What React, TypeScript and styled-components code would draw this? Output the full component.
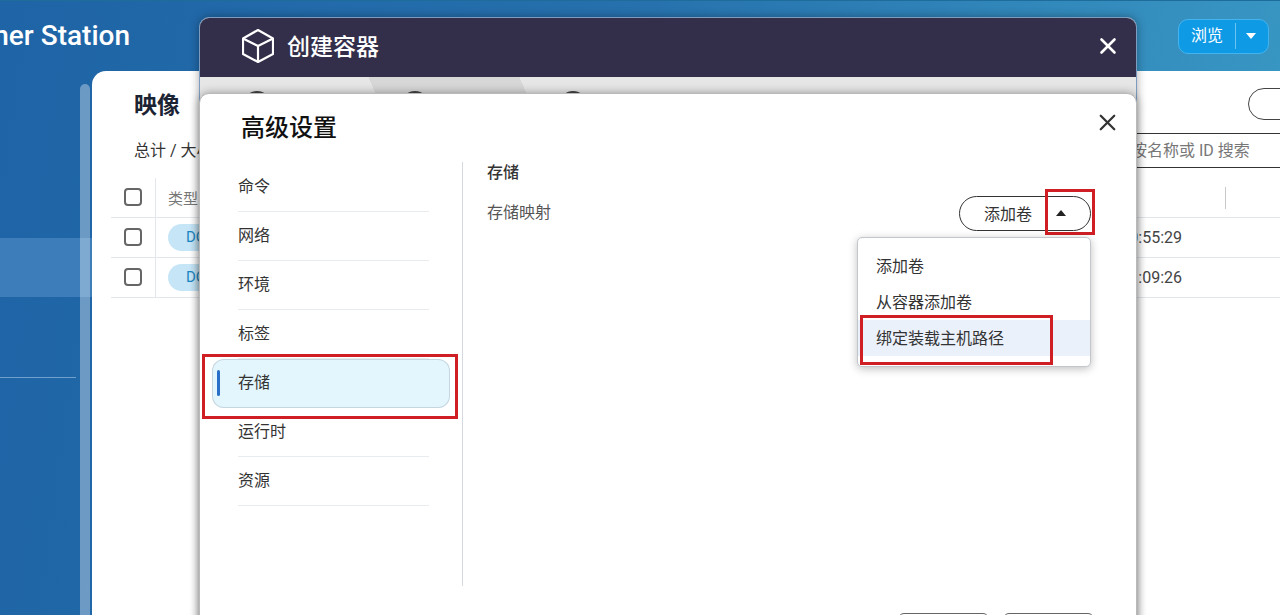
import React from "react";
import styled, { createGlobalStyle } from "styled-components";
import { X } from "lucide-react";

const GlobalStyle = createGlobalStyle`
  html, body {
    margin: 0;
    width: 1280px;
    height: 615px;
    overflow: hidden;
    font-family: Roboto, "Noto Sans CJK SC", sans-serif;
  }
  * {
    box-sizing: border-box;
  }
`;

const Page = styled.div`
  position: relative;
  width: 1280px;
  height: 615px;
  overflow: hidden;
  display: flex;
  flex-direction: column;
  border-top: 1px solid #1d6c99;
  background: linear-gradient(98deg, #1e64a6 0%, #2670ad 45%, #3a9ac5 100%);
`;

const TopBar = styled.header`
  flex: none;
  height: 70px;
  display: flex;
  align-items: center;
  justify-content: space-between;
  padding-right: 11px;
`;

const AppTitle = styled.div`
  width: 130px;
  height: 40px;
  display: flex;
  justify-content: flex-end;
  align-items: center;
  overflow: hidden;
  white-space: nowrap;
  margin-top: -1px;
  color: #fff;
  font-size: 28px;
  font-weight: 500;
`;

const BrowseButton = styled.div`
  width: 91px;
  height: 35px;
  display: flex;
  align-items: center;
  color: #fff;
  font-size: 16px;
  background: #0f9ae6;
  border: 1px solid #45b3ee;
  border-radius: 10px;
`;

const BrowseLabel = styled.span`
  width: 57px;
  height: 26px;
  line-height: 26px;
  text-align: center;
  border-right: 1px solid #6cc4f2;
`;

const BrowseCaret = styled.span`
  margin-left: 10px;
  width: 0;
  height: 0;
  border-left: 5px solid transparent;
  border-right: 5px solid transparent;
  border-top: 6px solid #fff;
`;

const Body = styled.div`
  flex: 1;
  min-height: 0;
  display: flex;
`;

const Sidebar = styled.nav`
  position: relative;
  flex: none;
  width: 92px;
  padding-top: 167px;
`;

const SidebarActive = styled.div`
  height: 59px;
  background: #3c7dba;
`;

const SidebarRule = styled.div`
  width: 76px;
  height: 1px;
  margin-top: 80px;
  background: #6f9fcc;
`;

const Scrollbar = styled.div`
  position: absolute;
  left: 80px;
  top: 13px;
  bottom: 0;
  width: 10px;
  border-radius: 5px 5px 0 0;
  background: rgba(255, 255, 255, 0.34);
`;

const Panel = styled.main`
  flex: 1;
  min-width: 0;
  padding: 17px 0 0 19px;
  background: #fff;
  border-radius: 14px 0 0 0;
`;

const PanelHead = styled.div`
  height: 90px;
  padding-left: 23px;
  position: relative;
  display: flex;
  flex-direction: column;
`;

const PanelTitle = styled.h2`
  margin: 1px 0 0;
  height: 36px;
  line-height: 34px;
  font-size: 23px;
  font-weight: 700;
  color: #1c2433;
`;

const PanelSummary = styled.div`
  margin-top: 14px;
  line-height: 24px;
  font-size: 16px;
  color: #333;
`;

const GhostButton = styled.div`
  position: absolute;
  left: 1137px;
  top: 0;
  width: 80px;
  height: 32px;
  border: 1px solid #444;
  border-radius: 16px;
`;

const SearchBox = styled.div`
  position: absolute;
  left: 900px;
  top: 45px;
  width: 300px;
  height: 35px;
  padding-left: 120px;
  line-height: 33px;
  white-space: nowrap;
  font-size: 16px;
  color: #777;
  border-top: 1px solid #333;
  border-bottom: 1px solid #333;
`;

const TableRow = styled.div<{ $head?: boolean }>`
  height: 40px;
  display: flex;
  align-items: center;
  border-bottom: 1px solid #e3e6ea;
  font-size: 15px;
  color: ${(p) => (p.$head ? "#777" : "#333")};
`;

const CheckCell = styled.div`
  flex: none;
  width: 45px;
  height: 100%;
  padding: 0 0 1px 13px;
  display: flex;
  align-items: center;
  border-right: 1px solid #e3e6ea;
`;

const Checkbox = styled.span`
  width: 18px;
  height: 18px;
  border: 2px solid #666;
  border-radius: 4px;
`;

const TypeCell = styled.div`
  flex: none;
  width: 120px;
  margin-left: 12px;
`;

const TypePill = styled.span`
  display: block;
  width: 90px;
  height: 27px;
  line-height: 27px;
  padding-left: 18px;
  font-size: 15px;
  color: #1b86c2;
  background: #c6e6f8;
  border-radius: 14px;
`;

const TimeCell = styled.div`
  width: 894px;
  text-align: right;
  font-size: 16px;
  color: #444;
`;

const HeadRule = styled.span`
  width: 1px;
  height: 22px;
  margin-left: 937px;
  background: #c9c9c9;
`;

const CreateDialog = styled.section`
  position: absolute;
  left: 199px;
  top: 16px;
  width: 938px;
  bottom: -120px;
  border-radius: 10px 10px 0 0;
  border: 1px solid #7d9cc0;
  overflow: hidden;
  background: #e6e6e6;
  box-shadow: 0 0 10px rgba(0, 0, 0, 0.35);
`;

const CreateHeader = styled.div`
  height: 59px;
  padding: 0 15px 3px 42px;
  display: flex;
  align-items: center;
  color: #fff;
  background: #332e4a;
`;

const CreateTitle = styled.h1`
  flex: 1;
  margin: 0 0 2px 13px;
  font-size: 23px;
  font-weight: 500;
`;

const Steps = styled.div`
  height: 40px;
  padding: 14px 0 0 43px;
  display: flex;
  gap: 130px;
  background: linear-gradient(
    66deg,
    #e6e6e6 170px,
    #d7d7d7 170px,
    #d7d7d7 308px,
    #e6e6e6 308px
  );
`;

const StepDot = styled.span`
  width: 28px;
  height: 28px;
  border: 2px solid #444;
  border-radius: 50%;
`;

const SettingsDialog = styled.section`
  position: absolute;
  left: 199px;
  top: 92px;
  width: 938px;
  bottom: -120px;
  background: #fff;
  border: 1px solid #b9b9b9;
  border-radius: 10px 10px 0 0;
  box-shadow: 0 0 10px rgba(0, 0, 0, 0.35);
`;

const SettingsHeader = styled.div`
  height: 68px;
  padding: 0 15px 6px 41px;
  display: flex;
  align-items: center;
  justify-content: space-between;
`;

const SettingsTitle = styled.h2`
  margin: 0;
  font-size: 24px;
  font-weight: 500;
  color: #111;
`;

const CloseButton = styled.span<{ $tone: string; $lift?: number }>`
  display: flex;
  color: ${(p) => p.$tone};
  margin-bottom: ${(p) => p.$lift ?? 0}px;
`;

const Columns = styled.div`
  height: 424px;
  display: flex;
`;

const SideMenu = styled.ul`
  flex: none;
  width: 263px;
  height: 100%;
  margin: 0;
  padding: 1px 0 0 12px;
  list-style: none;
  border-right: 1px solid #d5dae0;
`;

const MenuItem = styled.li<{ $active?: boolean }>`
  position: relative;
  width: 238px;
  height: 49px;
  padding: 0 0 6px 26px;
  display: flex;
  align-items: center;
  font-size: 16px;
  color: #333;
  border-radius: 12px;
  background: ${(p) => (p.$active ? "#e3f5fd" : "transparent")};
  box-shadow: ${(p) => (p.$active ? "inset 0 0 0 1px #c6d6df" : "none")};

  &::before {
    content: "";
    display: ${(p) => (p.$active ? "block" : "none")};
    position: absolute;
    left: 5px;
    top: 11px;
    width: 3px;
    height: 26px;
    border-radius: 2px;
    background: #2a70c9;
  }

  &::after {
    content: "";
    display: ${(p) => (p.$active ? "none" : "block")};
    position: absolute;
    left: 26px;
    bottom: 0;
    width: 191px;
    height: 1px;
    background: #e9ecef;
  }
`;

const RedMark = styled.span<{ $inset: string }>`
  position: absolute;
  inset: ${(p) => p.$inset};
  border: 3px solid #cf1f24;
  pointer-events: none;
`;

const Content = styled.div`
  flex: 1;
  padding: 1px 45px 0 24px;
`;

const SectionTitle = styled.h3`
  margin: 0;
  line-height: 20px;
  font-size: 16px;
  font-weight: 500;
  color: #333;
`;

const MappingRow = styled.div`
  margin-top: 13px;
  display: flex;
  align-items: center;
  justify-content: space-between;
`;

const MappingLabel = styled.span`
  margin-bottom: 6px;
  font-size: 16px;
  color: #555;
`;

const SplitButton = styled.div`
  position: relative;
  width: 132px;
  height: 35px;
  padding: 0 0 1px 24px;
  display: flex;
  align-items: center;
  font-size: 16px;
  color: #333;
  border: 1px solid #333;
  border-radius: 18px;
`;

const SplitCaret = styled.span`
  margin-left: 24px;
  width: 0;
  height: 0;
  border-left: 5px solid transparent;
  border-right: 5px solid transparent;
  border-bottom: 6px solid #222;
`;

const Dropdown = styled.ul`
  position: absolute;
  right: -1px;
  top: 40px;
  width: 234px;
  margin: 0;
  padding: 10px 0;
  list-style: none;
  background: #fff;
  border: 1px solid #c3c7cc;
  border-radius: 5px;
  box-shadow: 0 2px 8px rgba(0, 0, 0, 0.25);
`;

const DropdownItem = styled.li<{ $hover?: boolean }>`
  position: relative;
  height: 36px;
  padding: 0 0 3px 18px;
  display: flex;
  align-items: center;
  font-size: 16px;
  color: #333;
  background: ${(p) => (p.$hover ? "#ebf1fb" : "transparent")};
`;

const Footer = styled.div`
  padding: 27px 42px 0 0;
  display: flex;
  justify-content: flex-end;
  gap: 14px;
`;

const FooterButton = styled.span`
  width: 91px;
  height: 36px;
  border: 1px solid #666;
  border-radius: 6px;
`;

const CubeIcon = () => (
  <svg width="32" height="34" viewBox="0 0 32 34" fill="none" stroke="#fff" strokeWidth="2.2" strokeLinejoin="round">
    <path d="M16 1 L31 9.5 V25 L16 33 L1 25 V9.5 Z" />
    <path d="M1 9.5 L16 17 L31 9.5 M16 17 V33" />
  </svg>
);

const menuItems = ["命令", "网络", "环境", "标签", "存储", "运行时", "资源"];

const App = () => {
  return (
    <>
      <GlobalStyle />
      <Page>
        <TopBar>
          <AppTitle>Container Station</AppTitle>
          <BrowseButton>
            <BrowseLabel>浏览</BrowseLabel>
            <BrowseCaret />
          </BrowseButton>
        </TopBar>
        <Body>
          <Sidebar>
            <SidebarActive />
            <SidebarRule />
            <Scrollbar />
          </Sidebar>
          <Panel>
            <PanelHead>
              <PanelTitle>映像</PanelTitle>
              <PanelSummary>总计 / 大小</PanelSummary>
              <GhostButton />
              <SearchBox>按名称或 ID 搜索</SearchBox>
            </PanelHead>
            <TableRow $head>
              <CheckCell>
                <Checkbox />
              </CheckCell>
              <TypeCell>类型</TypeCell>
              <HeadRule />
            </TableRow>
            <TableRow>
              <CheckCell>
                <Checkbox />
              </CheckCell>
              <TypeCell>
                <TypePill>DOCKER</TypePill>
              </TypeCell>
              <TimeCell>2023/08/16 10:55:29</TimeCell>
            </TableRow>
            <TableRow>
              <CheckCell>
                <Checkbox />
              </CheckCell>
              <TypeCell>
                <TypePill>DOCKER</TypePill>
              </TypeCell>
              <TimeCell>2023/08/16 11:09:26</TimeCell>
            </TableRow>
          </Panel>
        </Body>

        <CreateDialog>
          <CreateHeader>
            <CubeIcon />
            <CreateTitle>创建容器</CreateTitle>
            <CloseButton $tone="#fff">
              <X size={26} strokeWidth={2.4} />
            </CloseButton>
          </CreateHeader>
          <Steps>
            <StepDot />
            <StepDot />
            <StepDot />
          </Steps>
        </CreateDialog>

        <SettingsDialog>
          <SettingsHeader>
            <SettingsTitle>高级设置</SettingsTitle>
            <CloseButton $tone="#333" $lift={6}>
              <X size={27} strokeWidth={2} />
            </CloseButton>
          </SettingsHeader>
          <Columns>
            <SideMenu>
              {menuItems.map((item) => (
                <MenuItem key={item} $active={item === "存储"}>
                  {item}
                  {item === "存储" && <RedMark $inset="-5px -8px -11px -10px" />}
                </MenuItem>
              ))}
            </SideMenu>
            <Content>
              <SectionTitle>存储</SectionTitle>
              <MappingRow>
                <MappingLabel>存储映射</MappingLabel>
                <SplitButton>
                  添加卷
                  <SplitCaret />
                  <RedMark $inset="-8px -5px -5px 85px" />
                  <Dropdown>
                    <DropdownItem>添加卷</DropdownItem>
                    <DropdownItem>从容器添加卷</DropdownItem>
                    <DropdownItem $hover>
                      绑定装载主机路径
                      <RedMark $inset="-5px 37px -9px 2px" />
                    </DropdownItem>
                  </Dropdown>
                </SplitButton>
              </MappingRow>
            </Content>
          </Columns>
          <Footer>
            <FooterButton />
            <FooterButton />
          </Footer>
        </SettingsDialog>
      </Page>
    </>
  );
};

export default App;
